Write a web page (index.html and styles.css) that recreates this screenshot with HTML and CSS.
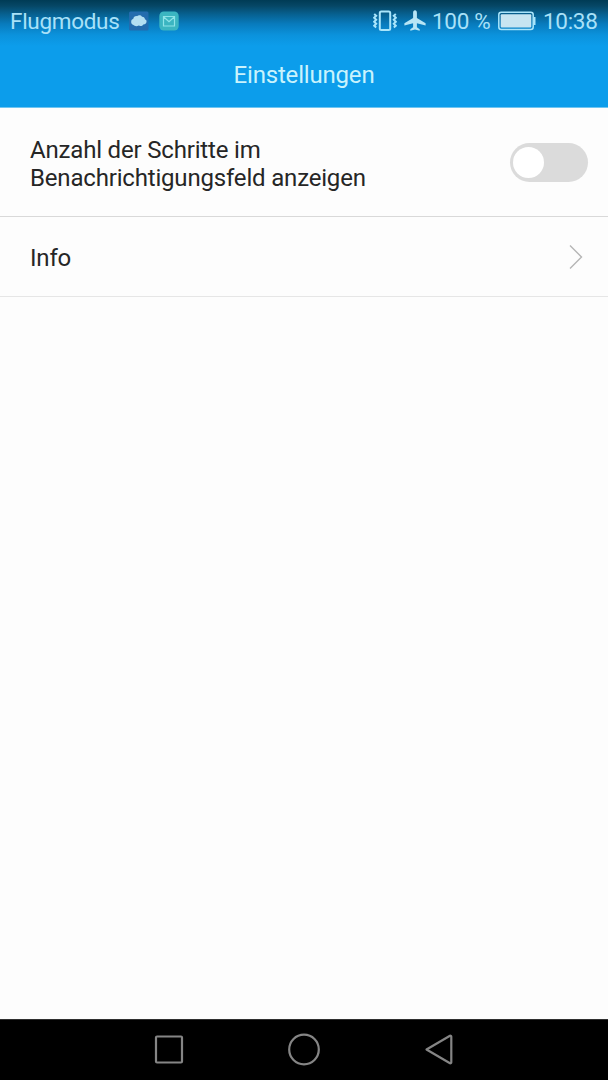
FILE: index.html
```
<!DOCTYPE html>
<html lang="de">
<head>
  <meta charset="UTF-8" />
  <meta name="viewport" content="width=device-width, initial-scale=1" />
  <title>Einstellungen</title>
  <link rel="stylesheet" href="styles.css">
</head>
<body>

  <header>
    <div class="status-bar">
      <div class="status-left">
        <span class="carrier">Flugmodus</span>
        <!-- Notification icons -->
        <svg class="app-icon" width="20" height="20" viewBox="0 0 20 20">
          <rect x="0" y="0.5" width="19.5" height="19" rx="1.5" fill="#236cae"/>
          <path d="M4.500 14a3.200 3.200 0 0 1-2.300-3.400c0-1.400.9-2.300 2-2.500C4.500 5.900 6.300 4.800 8 5.200c1.500-1.400 4-1 5 .5 1.700-.1 2.900 1 2.900 2.500 1.300.4 1.900 1.500 1.600 2.800-.3 1.500-1.500 2.500-3.200 2.400-1 1.600-3 1.900-4.600 1.100-1.800 1-4.100.8-5.200-.5z" fill="#b3dff2"/>
        </svg>
        <svg class="app-icon" width="20" height="20" viewBox="0 0 20 20">
          <rect x="0.300" y="0.500" width="19.400" height="19" rx="4.500" fill="#3bb5c1"/>
          <path d="M4.500 5.500h11v9.500h-11zM4.500 5.800l5.500 5 5.500-5" fill="none" stroke="#8ee3e8" stroke-width="1.200"/>
        </svg>
      </div>
      <div class="status-right">
        <svg class="vibrate" width="24" height="22" viewBox="0 0 24 22">
          <rect x="6.800" y="1.500" width="10.400" height="18.500" rx="1.500"/>
          <path d="M1.200 4l2 1.800-2 2 2 2-2 2 2 2-2 2 2 1.800M22.800 4l-2 1.800 2 2-2 2 2 2-2 2 2 2-2 1.800"/>
        </svg>
        <svg class="plane" width="22" height="22" viewBox="0 0 22 22">
          <path d="M11 .3c1.300 0 1.900 1.100 1.900 2.400v5.400l8.700 5.200v2.300l-8.700-2.300v3.900l2.800 2.100v1.500L11 19.600l-4.700 1.200v-1.500l2.800-2.100v-3.900L.4 15.600v-2.300l8.700-5.200V2.700C9.100 1.400 9.700.3 11 .3z"/>
        </svg>
        <span class="percent">100 %</span>
        <svg class="battery" width="38" height="20" viewBox="0 0 38 20">
          <rect x="0.800" y="1.200" width="34.400" height="17.400" rx="2.500" fill="none" stroke="#a9e5fb" stroke-width="1.500"/>
          <rect x="2.700" y="3.200" width="30.600" height="13.400" rx="1" fill="#c7e5f1"/>
          <path d="M35.500 6h2v8h-2z" fill="#a9e5fb"/>
        </svg>
        <span class="clock">10:38</span>
      </div>
    </div>
    <h1>Einstellungen</h1>
  </header>

  <main>
    <label class="setting setting-steps">
      <span>Anzahl der Schritte im<br>Benachrichtigungsfeld anzeigen</span>
      <input type="checkbox" class="switch">
    </label>
    <a href="#" class="setting setting-info">
      <span>Info</span>
      <svg class="chevron" width="16" height="26" viewBox="0 0 16 26">
        <path d="M2 1.500L13.500 13 2 24.500"/>
      </svg>
    </a>
  </main>

  <nav>
    <svg width="34" height="34" viewBox="0 0 34 34"><rect x="4" y="3.500" width="26" height="26" rx="1"/></svg>
    <svg width="34" height="34" viewBox="0 0 34 34"><circle cx="17" cy="16.500" r="14.800"/></svg>
    <svg width="34" height="34" viewBox="0 0 34 34"><path d="M4.500 16.500L28 2.700a1 1 0 0 1 1.300 1v25.600a1 1 0 0 1-1.300 1z"/></svg>
  </nav>

</body>
</html>
```

FILE: styles.css
```
* {
  box-sizing: border-box;
}

body {
  font-family: Roboto, sans-serif;
  font-size: 24px;
  letter-spacing: -0.18px;
  background: #fdfdfd;
  color: #262626;
  margin: 0;
  display: flex;
  flex-direction: column;
  height: 1080px;
}

header {
  height: 108px;
  background: linear-gradient(to bottom, #003b55 0, #064766 6px, #07608f 14px, #087bbd 24px, #0b92dc 35px, #0c9deb 46px);
  color: #c9f3fd;
  border-bottom: 1px solid #70c5f1;
}

header h1 {
  margin: 0;
  font-size: 24px;
  font-weight: 400;
  line-height: 28px;
  text-align: center;
  padding-top: 20px;
}

.status-bar {
  display: flex;
  justify-content: space-between;
  align-items: center;
  height: 41px;
  padding: 0 10px;
  font-size: 22.5px;
  letter-spacing: -0.3px;
  color: #a9e1f8;
}

.status-left,
.status-right {
  display: flex;
  align-items: center;
}

.status-bar span {
  white-space: nowrap;
}

.carrier {
  width: 109px;
}

.app-icon {
  margin-left: 10px;
}

.vibrate {
  fill: none;
  stroke: #a9e5fb;
  stroke-width: 2;
}

.plane {
  fill: #b8e5f5;
  margin-left: 7px;
  margin-right: 1px;
}

.percent {
  width: 60px;
  margin-left: 5px;
}

.battery {
  margin-left: 6px;
}

.clock {
  width: 55px;
  margin-left: 7px;
}

main {
  flex: 1;
}

.setting {
  display: flex;
  justify-content: space-between;
  align-items: center;
  padding: 0 20px 0 30px;
  line-height: 28px;
  color: inherit;
  text-decoration: none;
}

.setting span {
  padding-top: 2px;
}

.setting-steps {
  height: 109px;
  border-bottom: 1px solid #d9d9d9;
}

.setting-steps span {
  padding-top: 4px;
}

.setting-info {
  height: 80px;
  padding-right: 24px;
  border-bottom: 1px solid #e6e6e6;
}

.switch {
  appearance: none;
  width: 78px;
  height: 39px;
  margin: 0;
  padding: 4px 3px;
  border-radius: 20px;
  background-color: #dbdbdb;
}

.switch::before {
  content: "";
  display: block;
  width: 31px;
  height: 31px;
  border-radius: 50%;
  background-color: white;
}

.chevron {
  fill: none;
  stroke: #b5b5b5;
  stroke-width: 1.4;
}

nav {
  display: flex;
  justify-content: center;
  align-items: center;
  gap: 101px;
  height: 61px;
  background-color: black;
  border-top: 1px solid #303030;
}

nav svg {
  fill: none;
  stroke: #858585;
  stroke-width: 2.2;
  stroke-linejoin: round;
}
```
